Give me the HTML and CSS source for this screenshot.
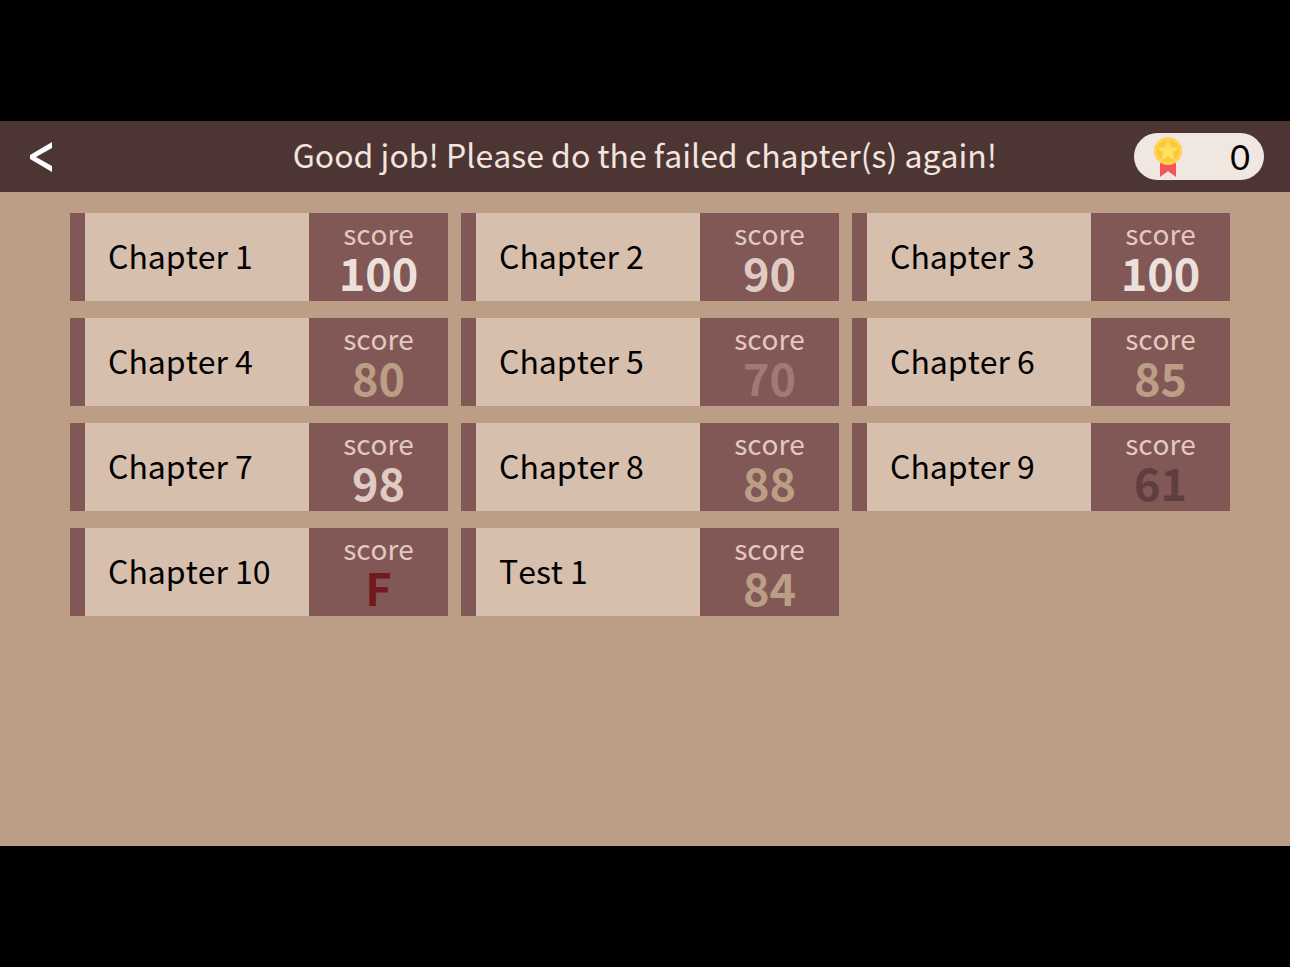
FILE: index.html
```html
<!DOCTYPE html>
<html lang="en">
<head>
<meta charset="utf-8">
<meta name="viewport" content="width=device-width, initial-scale=1">
<title>Chapter scores</title>
<link rel="stylesheet" href="styles.css">
</head>
<body>
<div class="screen">
  <header class="topbar">
    <button class="back" type="button" aria-label="Back">
      <svg width="22" height="30" viewBox="0 0 22 30" aria-hidden="true"><path d="M22 0v6L6 15l16 9v6L0 17v-4z" fill="#fff"/></svg>
    </button>
    <h1 class="title">Good job! Please do the failed chapter(s) again!</h1>
    <div class="medals">
      <svg class="medal" width="28" height="40" viewBox="0 0 28 40" aria-hidden="true">
        <path d="M6 25h16v15l-8-6-8 6z" fill="#f2555a"/>
        <circle cx="14" cy="14" r="14" fill="#ffd54a"/>
        <circle cx="14" cy="14" r="11" fill="#fbc640"/>
        <path d="M14 5l2.700 5.600 6.100.8-4.500 4.200 1.200 6.100-5.500-3-5.500 3 1.200-6.100-4.500-4.200 6.100-.8z" fill="#ffe05c" stroke="#ffe05c" stroke-width="1.500" stroke-linejoin="round"/>
      </svg>
      <span class="count">0</span>
    </div>
  </header>
  <main class="chapters">
    <article class="card"><h2 class="name">Chapter 1</h2><p class="result"><span class="label">score</span><strong class="value perfect">100</strong></p></article>
    <article class="card"><h2 class="name">Chapter 2</h2><p class="result"><span class="label">score</span><strong class="value great">90</strong></p></article>
    <article class="card"><h2 class="name">Chapter 3</h2><p class="result"><span class="label">score</span><strong class="value perfect">100</strong></p></article>
    <article class="card"><h2 class="name">Chapter 4</h2><p class="result"><span class="label">score</span><strong class="value good">80</strong></p></article>
    <article class="card"><h2 class="name">Chapter 5</h2><p class="result"><span class="label">score</span><strong class="value fair">70</strong></p></article>
    <article class="card"><h2 class="name">Chapter 6</h2><p class="result"><span class="label">score</span><strong class="value good">85</strong></p></article>
    <article class="card"><h2 class="name">Chapter 7</h2><p class="result"><span class="label">score</span><strong class="value great">98</strong></p></article>
    <article class="card"><h2 class="name">Chapter 8</h2><p class="result"><span class="label">score</span><strong class="value good">88</strong></p></article>
    <article class="card"><h2 class="name">Chapter 9</h2><p class="result"><span class="label">score</span><strong class="value poor">61</strong></p></article>
    <article class="card"><h2 class="name">Chapter 10</h2><p class="result"><span class="label">score</span><strong class="value failed">F</strong></p></article>
    <article class="card"><h2 class="name">Test 1</h2><p class="result"><span class="label">score</span><strong class="value good">84</strong></p></article>
  </main>
</div>
</body>
</html>
```
FILE: styles.css
```css
* { box-sizing: border-box; }

body {
  margin: 0;
  min-height: 100vh;
  display: flex;
  flex-direction: column;
  justify-content: center;
  background: #000;
  font-family: "Noto Sans CJK SC", "Noto Sans", sans-serif;
  font-kerning: none;
}

.screen {
  aspect-ratio: 16 / 9;
  background: #bc9e87;
}

.topbar {
  display: grid;
  grid-template-columns: 1fr auto 1fr;
  align-items: center;
  padding: 12px 26px;
  background: #4d3534;
}

.back {
  display: flex;
  justify-self: start;
  padding: 2px 4px 0;
  border: 0;
  background: none;
  cursor: pointer;
}

.title {
  margin: 0;
  padding-bottom: 4px;
  color: #f2e4df;
  font-size: 32px;
  font-weight: 400;
  line-height: 43px;
}

.medals {
  display: flex;
  align-items: center;
  justify-content: space-between;
  justify-self: end;
  width: 130px;
  height: 47px;
  padding: 2px 14px 0 20px;
  border-radius: 24px;
  background: #f1e7e1;
}

.count {
  font-family: Lato, sans-serif;
  font-size: 34px;
  line-height: 40px;
}

.chapters {
  display: grid;
  grid-template-columns: repeat(3, 1fr);
  gap: 17px 13px;
  padding: 21px 60px 21px 70px;
}

.card {
  display: flex;
  height: 88px;
  border-left: 15px solid #825856;
  background: #d7bfae;
}

.name {
  flex: 1;
  margin: 0;
  padding-left: 23px;
  font-size: 32px;
  font-weight: 400;
  line-height: 84px;
  white-space: nowrap;
}

.result {
  display: flex;
  flex-direction: column;
  align-items: center;
  width: 139px;
  margin: 0;
  background: #825856;
}

.label {
  color: #e4c9bf;
  font-size: 28px;
  line-height: 40px;
}

.value {
  font-size: 45px;
  font-weight: 700;
  line-height: 38px;
}

.perfect { color: #ebe0dc; }
.great { color: #dfcbc3; }
.good { color: #bc9e87; }
.fair { color: #a17a77; }
.poor { color: #5f3f3d; }
.failed { color: #701a1d; }
```
